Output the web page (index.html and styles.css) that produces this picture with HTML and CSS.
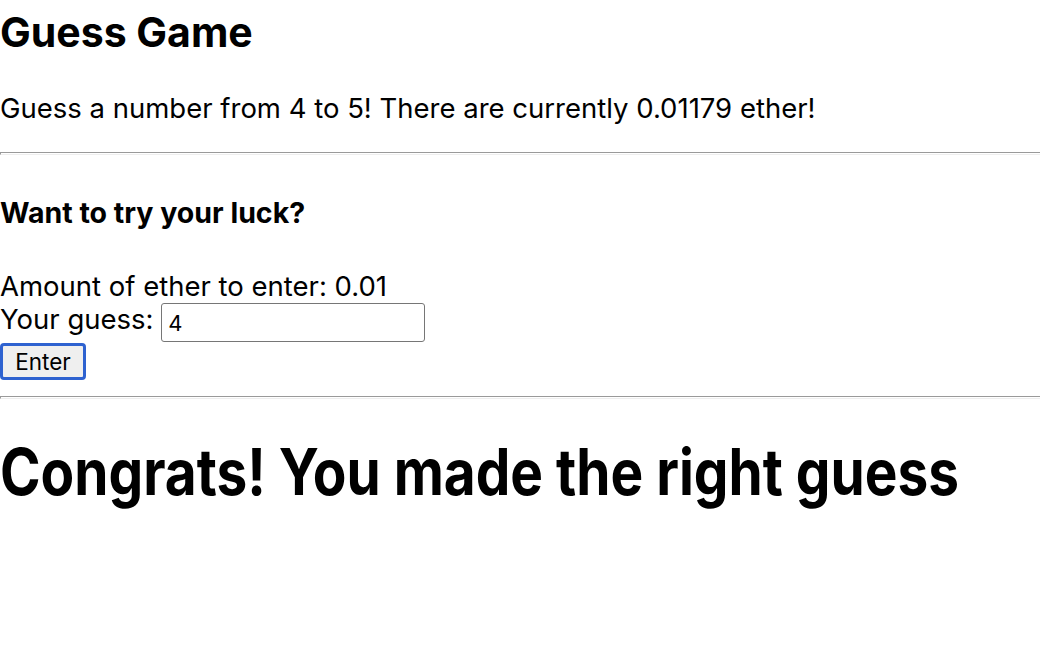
FILE: index.html
```html
<!DOCTYPE html>
<html>
<head>
<meta charset="utf-8">
<title>Guess Game</title>
<link rel="stylesheet" href="styles.css">
</head>
<body>
<h1 class="title">Guess Game</h1>
<p class="intro">Guess a number from 4 to 5! There are currently 0.01179 ether!</p>
<hr class="rule rule-top">
<form class="entry">
  <h4 class="entry-heading">Want to try your luck?</h4>
  <div class="entry-line amount-line">Amount of ether to enter: 0.01</div>
  <div class="entry-line guess-line">
    <label class="guess-label">Your guess: <input class="guess-input" type="text" value="4"></label>
  </div>
  <button class="enter-btn" type="button">Enter</button>
</form>
<hr class="rule rule-bottom">
<h1 class="congrats">Congrats! You made the right guess</h1>
</body>
</html>
```

FILE: styles.css
```css
html, body {
  margin: 0;
  padding: 0;
  background: #fff;
}
body {
  font-family: Inter, "Noto Sans", sans-serif;
  font-size: 27.5px;
  color: #000;
  line-height: 1.2;
}
.title {
  font-size: 41px;
  font-weight: 700;
  margin: 8px 0 0 0;
  line-height: 1.2;
}
.intro {
  margin: 35px 0 0 0;
}
.rule {
  margin: 0;
  border: 0;
  border-top: 1px solid #9a9a9a;
  border-bottom: 1px solid #eeeeee;
  border-left: 1px solid #9a9a9a;
  height: 1px;
}
.rule-top {
  margin-top: 27px;
}
.rule-bottom {
  margin-top: 16px;
}
.entry {
  margin: 0;
}
.entry-heading {
  font-size: 28.5px;
  font-weight: 700;
  margin: 41px 0 0 0;
}
.amount-line {
  margin-top: 40px;
}
.guess-line {
  margin: 0;
}
.guess-input {
  font-family: Inter, "Noto Sans", sans-serif;
  font-size: 22px;
  width: 264px;
  height: 39px;
  box-sizing: border-box;
  border: 1px solid #767676;
  border-radius: 3px;
  padding: 0 6px;
  margin: 0;
  vertical-align: top;
}
.enter-btn {
  font-family: Inter, "Noto Sans", sans-serif;
  font-size: 22.5px;
  width: 86px;
  height: 37px;
  margin: 1px 0 0 0;
  padding: 0;
  background: #efefef;
  border: 3px solid #2e62d0;
  border-radius: 4px;
  color: #000;
  display: block;
}
.congrats {
  font-size: 64px;
  font-weight: 700;
  margin: 35px 0 0 0;
  white-space: nowrap;
  transform: scaleX(0.858);
  transform-origin: left center;
}
```
